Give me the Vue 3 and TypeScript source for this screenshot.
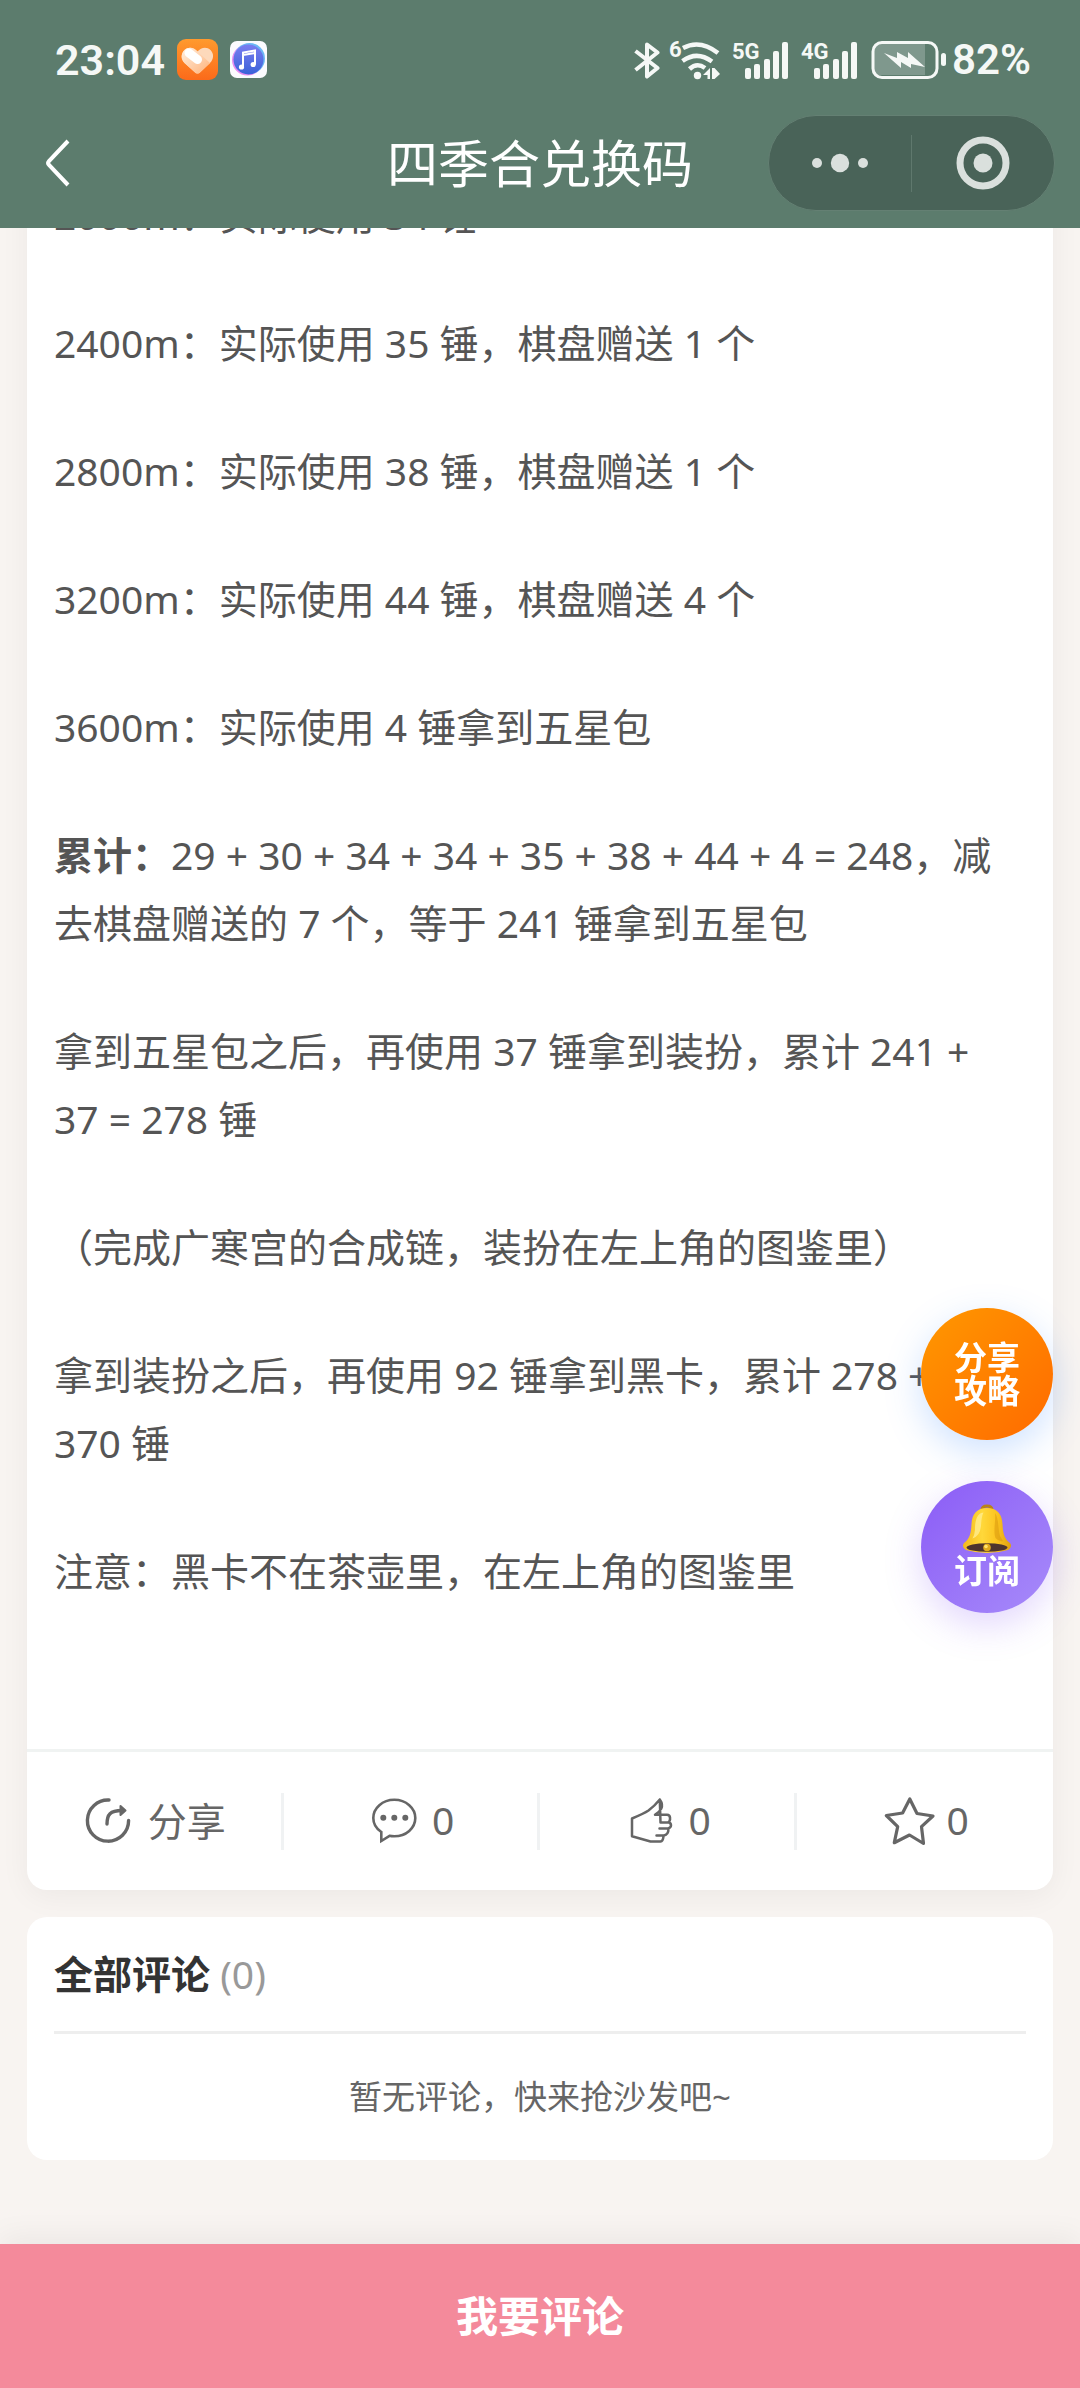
<script setup lang="ts">
import { ref } from 'vue'

interface Paragraph {
  lead?: string
  text: string
}

const paragraphs: Paragraph[] = [
  { text: '2000m：实际使用 34 锤' },
  { text: '2400m：实际使用 35 锤，棋盘赠送 1 个' },
  { text: '2800m：实际使用 38 锤，棋盘赠送 1 个' },
  { text: '3200m：实际使用 44 锤，棋盘赠送 4 个' },
  { text: '3600m：实际使用 4 锤拿到五星包' },
  { lead: '累计：', text: '29 + 30 + 34 + 34 + 35 + 38 + 44 + 4 = 248，减去棋盘赠送的 7 个，等于 241 锤拿到五星包' },
  { text: '拿到五星包之后，再使用 37 锤拿到装扮，累计 241 + 37\u00a0= 278 锤' },
  { text: '（完成广寒宫的合成链，装扮在左上角的图鉴里）' },
  { text: '拿到装扮之后，再使用 92 锤拿到黑卡，累计 278 + 92 = 370 锤' },
  { text: '注意：黑卡不在茶壶里，在左上角的图鉴里' },
]

const networks: string[] = ['5G', '4G']
const bars = [
  { x: 13, y: 67 },
  { x: 22, y: 63 },
  { x: 32, y: 58 },
  { x: 41, y: 50 },
  { x: 50, y: 41 },
]

const comments = ref(0)
const likes = ref(0)
const stars = ref(0)
</script>

<template>
  <div class="page">
    <header class="header">
      <div class="status">
        <div class="status-left">
          <span class="time">23:04</span>
          <svg class="app-heart" viewBox="0 0 41 41" aria-hidden="true">
            <defs>
              <linearGradient id="heartBg" x1="0" y1="0" x2="0" y2="1">
                <stop offset="0" stop-color="#ff9a2e" />
                <stop offset="1" stop-color="#fb6a1a" />
              </linearGradient>
              <linearGradient id="heartFill" x1="0" y1="0" x2="1" y2="1">
                <stop offset="0" stop-color="#fff0e0" />
                <stop offset="1" stop-color="#ffb27a" />
              </linearGradient>
            </defs>
            <rect width="41" height="41" rx="9" fill="url(#heartBg)" />
            <path d="M20.500 12.500C17 8 11 7.500 7.500 11C3.500 15 4 20.500 7.500 24L17.500 33Q20.500 36 23.500 33L33 24C37 20 37 14.500 33.500 11C30 7.500 24 8 20.500 12.500Z" fill="#fdd9bb" />
            <path d="M20.500 12.500C17 8 11 7.500 7.500 11C3.500 15 4 20.500 7.500 24L17.500 33Q20.500 36 23.500 33L33 24Z" fill="url(#heartFill)" />
            <path d="M12 14L20.500 20.500" stroke="#fff" stroke-width="9" stroke-linecap="round" />
          </svg>
          <svg class="app-music" viewBox="0 0 37 37" aria-hidden="true">
            <defs>
              <linearGradient id="musicBg" x1="0" y1="0" x2="0" y2="1">
                <stop offset="0" stop-color="#7b7df0" />
                <stop offset="1" stop-color="#3a62d8" />
              </linearGradient>
            </defs>
            <rect width="37" height="37" rx="7" fill="#fbfbfe" />
            <circle cx="17.500" cy="19" r="15.500" fill="#e88cf0" />
            <circle cx="19.500" cy="17.500" r="15.500" fill="#6ab8f5" />
            <circle cx="18.500" cy="18.500" r="15" fill="url(#musicBg)" />
            <path d="M13 26V11.500L25 9.500V23.500M13 14L25 12" fill="none" stroke="#fff" stroke-width="2" />
            <circle cx="11.500" cy="26" r="2.600" fill="#fff" />
            <circle cx="23.200" cy="23.500" r="2.600" fill="#fff" />
          </svg>
        </div>
        <div class="status-right">
          <div class="radios">
            <svg width="26" height="40" viewBox="0 0 26 40" aria-hidden="true">
              <path d="M1.500 11L23.500 28L13 36.500V4.500L23.500 12.500L1.500 30" fill="none" stroke="#f5f8f6" stroke-width="4" stroke-linejoin="round" />
            </svg>
            <svg width="51" height="42" viewBox="0 38 51 42" aria-hidden="true">
              <text x="0" y="56" class="tiny">6</text>
              <g fill="none" stroke="#f5f8f6" stroke-width="4.500">
                <path d="M14 47Q31 38 49 52" />
                <path d="M13.500 60Q28 49.500 43 60.500" />
                <path d="M20.500 68Q28 61 36 67" />
              </g>
              <circle cx="28.500" cy="74.500" r="3.700" fill="#f5f8f6" />
              <path d="M34 74L41 67V78H38.500V74ZM43 67H45.500L51 73L45.500 78H43Z" fill="#f5f8f6" />
            </svg>
          </div>
          <svg v-for="name in networks" :key="name" width="57" height="42" viewBox="0 38 57 42" aria-hidden="true">
            <text x="0" y="58" class="tiny">{{ name }}</text>
            <rect v-for="bar in bars" :key="bar.x" :x="bar.x" :y="bar.y" width="6" :height="78 - bar.y" rx="2" fill="#f5f8f6" />
          </svg>
          <div class="battery">
            <svg width="76" height="40" viewBox="0 0 76 40" aria-hidden="true">
              <path d="M9 3H55V35H9Q4 35 4 29V9Q4 3 9 3Z" fill="#fff" opacity="0.220" />
              <rect x="3" y="2.500" width="64" height="35" rx="9" fill="none" stroke="#f5f8f6" stroke-width="3" />
              <rect x="71" y="13" width="5" height="13" rx="2.500" fill="#f5f8f6" />
              <path d="M14 13L27 18V12L38 18V12L55 27L41 24V28L31 22V28Z" fill="#f5f8f6" />
            </svg>
            <span class="percent">82%</span>
          </div>
        </div>
      </div>
      <nav class="nav">
        <button class="back" type="button" aria-label="返回">
          <svg width="27" height="50" viewBox="0 0 27 50" aria-hidden="true">
            <path d="M24 3L5 23Q3.200 25 5 27L24 47" fill="none" stroke="#fff" stroke-width="4" />
          </svg>
        </button>
        <h1 class="title">四季合兑换码</h1>
        <div class="capsule">
          <button type="button" aria-label="更多">
            <svg width="60" height="20" viewBox="0 0 60 20" fill="#dae0dd" aria-hidden="true">
              <circle cx="7" cy="10" r="5" />
              <circle cx="30" cy="10" r="9.200" />
              <circle cx="53" cy="10" r="5" />
            </svg>
          </button>
          <span class="capsule-line"></span>
          <button type="button" aria-label="关闭">
            <svg width="54" height="54" viewBox="0 0 54 54" aria-hidden="true">
              <circle cx="27" cy="27" r="23" fill="none" stroke="#dae0dd" stroke-width="7" />
              <circle cx="27" cy="27" r="9.500" fill="#dae0dd" />
            </svg>
          </button>
        </div>
      </nav>
    </header>

    <main class="content">
      <article class="card post">
        <div class="post-body">
          <p v-for="p in paragraphs" :key="p.text"><strong v-if="p.lead">{{ p.lead }}</strong>{{ p.text }}</p>
        </div>
        <div class="actions">
          <button class="action" type="button">
            <svg viewBox="0 0 54 54" aria-hidden="true">
              <g fill="none" stroke="#666" stroke-width="3.400" stroke-linecap="round">
                <path d="M27 6A20.600 20.600 0 1 0 46.600 26.500" />
                <path d="M25 30C25 20.500 28 16.500 40 16.500" />
              </g>
              <path d="M38.500 12L43.500 16.500L38.500 21Z" fill="#666" stroke="#666" stroke-width="2" stroke-linejoin="round" />
            </svg>
            <span>分享</span>
          </button>
          <button class="action" type="button" aria-label="评论">
            <svg viewBox="0 0 54 54" aria-hidden="true">
              <path d="M15.300 47V38C10 34.500 7.300 29.500 7.300 24C7.300 14 16.500 5.800 28.300 5.800S49.300 14 49.300 24S40.100 42.300 28.300 42.300C26.700 42.300 25 42.200 23.500 41.800Z" fill="none" stroke="#666" stroke-width="2.600" />
              <g fill="#666">
                <circle cx="17.300" cy="23.700" r="3" />
                <circle cx="28.300" cy="23.700" r="3" />
                <circle cx="39.300" cy="23.700" r="3" />
              </g>
            </svg>
            <span>{{ comments }}</span>
          </button>
          <button class="action" type="button" aria-label="点赞">
            <svg viewBox="0 0 54 54" aria-hidden="true">
              <path d="M36.800 5.500C34 9 29.500 13.500 25.500 16.500C21 19.500 15 22 9 24.500V42.300L27.500 47.500H37.500Q40 47 40.500 42.300M33.500 41.500H40.500Q45.500 41 45.500 34.700M36.500 34.500H45Q48 33.500 48 31.300T45.500 28.300M37.500 28.500H45Q47.500 27 47 24Q47 20.700 44 20.700H32C37 17.500 42 13 36.800 5.500Z" fill="none" stroke="#666" stroke-width="2.500" stroke-linecap="round" stroke-linejoin="round" />
            </svg>
            <span>{{ likes }}</span>
          </button>
          <button class="action" type="button" aria-label="收藏">
            <svg viewBox="0 0 54 54" aria-hidden="true">
              <path d="M28.800 5L36 19.500L52 22L40.500 32.700L42.500 49.500L28.500 41L13.300 48.700L16.700 32.700L5.300 21.500L21.600 19Z" fill="none" stroke="#666" stroke-width="3.200" stroke-linejoin="round" />
            </svg>
            <span>{{ stars }}</span>
          </button>
        </div>
      </article>

      <section class="card comments">
        <h2 class="comments-title">全部评论 <span>({{ comments }})</span></h2>
        <p class="empty">暂无评论，快来抢沙发吧~</p>
      </section>
    </main>

    <footer class="footer">
      <button class="comment-button" type="button">我要评论</button>
    </footer>

    <div class="floats">
      <button class="float share" type="button">
        <span>分享</span>
        <span>攻略</span>
      </button>
      <button class="float subscribe" type="button">
        <svg width="50" height="50" viewBox="0 0 50 50" aria-hidden="true">
          <defs>
            <linearGradient id="bell" x1="0" y1="0" x2="1" y2="0">
              <stop offset="0" stop-color="#f5b91d" />
              <stop offset="0.400" stop-color="#ffd83a" />
              <stop offset="0.700" stop-color="#fcc420" />
              <stop offset="1" stop-color="#dfa012" />
            </linearGradient>
          </defs>
          <path d="M20 6Q20 2 25 2T30 6" fill="none" stroke="#b98318" stroke-width="3" />
          <path d="M25 4C15 4 10 10 9.500 20C9 30 7.500 35 2 39Q-1 43 4 46Q14 49 25 49T46 46Q51 43 48 39C42.500 35 41 30 40.500 20C40 10 35 4 25 4Z" fill="url(#bell)" />
          <ellipse cx="25" cy="43.500" rx="20.500" ry="4.300" fill="#4e342e" />
          <circle cx="25" cy="43.500" r="3.800" fill="#e0a81b" />
          <circle cx="24" cy="42.500" r="1.800" fill="#ffe36b" />
          <path d="M19 9C14 12 13 18 13 26Q12.500 31 10.500 34.500Q18 32 19 22Q19.500 12 21.500 8.500Z" fill="#ffeb8a" opacity="0.850" />
          <path d="M33 9C37 14 36 27 38 32L41 37Q37 38 33.500 34C31 27 34 16 33 9Z" fill="#d9990e" opacity="0.550" />
        </svg>
        <span>订阅</span>
      </button>
    </div>
  </div>
</template>

<style>
body {
  margin: 0;
  background: #f8f4f1;
}
</style>

<style scoped>
.page {
  display: flex;
  flex-direction: column;
  min-height: 100vh;
  background: #f8f4f1;
  color: #555;
  font-family: "Noto Sans", "Noto Sans CJK SC", sans-serif;
  font-size: 39px;
}

button {
  margin: 0;
  padding: 0;
  border: 0;
  background: none;
  color: inherit;
  font: inherit;
  cursor: pointer;
}

svg {
  display: block;
  flex: none;
}

.header {
  padding-bottom: 17px;
  background: #5c7c6d;
  color: #fff;
}

.status {
  display: flex;
  align-items: center;
  justify-content: space-between;
  box-sizing: border-box;
  height: 115px;
  padding: 4px 49px 0 55px;
  color: #f5f8f6;
  font-family: Roboto, sans-serif;
  font-weight: 600;
  line-height: 50px;
}

.status-left,
.status-right,
.radios,
.battery {
  display: flex;
  align-items: center;
}

.status-left {
  gap: 12px;
}

.status-right {
  gap: 12px;
}

.radios {
  gap: 9px;
}

.battery {
  gap: 6px;
}

.time {
  font-size: 43px;
}

.percent {
  font-size: 42px;
}

.app-heart {
  width: 41px;
  height: 41px;
}

.app-music {
  width: 37px;
  height: 37px;
}

.tiny {
  fill: #f5f8f6;
  font-family: Roboto, sans-serif;
  font-size: 22px;
  font-weight: 700;
}

.nav {
  display: grid;
  grid-template-columns: 1fr auto 1fr;
  align-items: center;
  height: 96px;
  padding: 0 25px;
}

.back {
  justify-self: start;
  padding: 0 19px;
}

.title {
  margin: 0;
  font-size: 51px;
  font-weight: 400;
  line-height: 72px;
}

.capsule {
  display: flex;
  align-items: center;
  justify-self: end;
  box-sizing: border-box;
  width: 287px;
  height: 96px;
  border: 1px solid #648073;
  border-radius: 48px;
  background: #496358;
}

.capsule button {
  display: flex;
  flex: 1;
  align-items: center;
  justify-content: center;
  height: 100%;
}

.capsule-line {
  width: 1px;
  height: 57px;
  background: #5f786d;
}

.content {
  flex: 1;
  overflow: hidden;
  padding: 0 27px 84px;
}

.card {
  border-radius: 20px;
  background: #fff;
}

.post {
  margin-top: -47px;
  box-shadow: 0 6px 30px rgba(0, 0, 0, 0.05);
}

.post-body {
  display: flex;
  flex-direction: column;
  gap: 60px;
  padding: 0 27px 144px;
}

.post-body p {
  margin: 0;
  line-height: 68px;
}

.actions {
  display: grid;
  grid-template-columns: repeat(4, 1fr);
  align-items: center;
  height: 138px;
  border-top: 3px solid #f0f3f2;
}

.action {
  display: flex;
  align-items: center;
  justify-content: center;
  gap: 12px;
  height: 57px;
  border-right: 3px solid #f0f2f3;
  color: #666;
}

.action:last-child {
  border-right: 0;
}

.action svg {
  width: 54px;
  height: 54px;
}

.action span {
  padding-bottom: 4px;
}

.comments {
  margin-top: 27px;
  padding: 0 27px;
}

.comments-title {
  margin: 0;
  border-bottom: 3px solid #eee;
  color: #333;
  font-size: 39px;
  font-weight: 700;
  line-height: 114px;
}

.comments-title span {
  color: #999;
  font-weight: 400;
}

.empty {
  margin: 0;
  color: #666;
  font-size: 33px;
  line-height: 126px;
  text-align: center;
}

.footer {
  position: sticky;
  bottom: 0;
  box-shadow: 0 -6px 30px rgba(0, 0, 0, 0.06);
}

.comment-button {
  display: block;
  width: 100%;
  height: 144px;
  padding-bottom: 5px;
  background: #f48a9b;
  color: #fff;
  font-size: 42px;
  font-weight: 700;
}

.floats {
  position: fixed;
  right: 27px;
  bottom: 775px;
  display: flex;
  flex-direction: column;
  gap: 41px;
}

.float {
  display: flex;
  flex-direction: column;
  align-items: center;
  justify-content: center;
  width: 132px;
  height: 132px;
  border-radius: 50%;
  color: #fff;
  font-size: 33px;
  font-weight: 700;
  line-height: 33px;
}

.share {
  background: linear-gradient(135deg, #ff9800, #ff6a00);
  box-shadow: 0 12px 36px rgba(64, 140, 255, 0.25);
}

.subscribe {
  padding-bottom: 4px;
  background: linear-gradient(135deg, #8b5cf6, #a78bfa);
  box-shadow: 0 12px 36px rgba(139, 92, 246, 0.25);
}
</style>
